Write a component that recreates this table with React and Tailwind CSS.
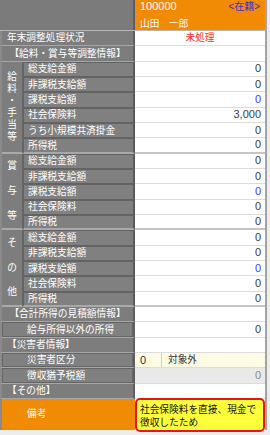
const FONT = { fontFamily: '"Liberation Sans", "Noto Sans CJK JP", sans-serif' };

const valueTone = {
  normal: "text-[#3a3a3a]",
  blue: "text-[#3d3dff]",
  muted: "text-[#8a8a8a]",
};

function Value({ children, tone = "normal", last, gray }) {
  return (
    <div
      className={`flex h-[15.33px] items-center justify-end pr-[4px] text-[11px] leading-none ${
        gray ? "bg-[#e9e9e9]" : "bg-white"
      } ${last ? "border-b-2 border-[#c4c4c4]" : "border-b border-[#dcdcdc]"} ${valueTone[tone]}`}
    >
      {children}
    </div>
  );
}

function SectionRow({ label, center, indent, children, value }) {
  return (
    <div className="flex h-[15.33px]">
      <div className="flex w-[135px] bg-[#7d7d7d] border-b border-[#a6a6a6] border-l-2 border-l-[#8a8a8a] border-r-2 border-r-[#5e5e5e]">
        <div
          className={`flex flex-1 items-center whitespace-nowrap text-[9.7px] leading-none text-white ${
            center ? "justify-center" : indent ? "pl-[24px]" : "pl-[5px]"
          } ${indent ? "border border-[#666] bg-[#808080]" : ""}`}
        >
          {label}
        </div>
      </div>
      <div className="flex-1">
        {children || <Value>{value}</Value>}
      </div>
    </div>
  );
}

function Group({ chars, spread, items }) {
  return (
    <div className="flex">
      <div className="flex w-[135px] border-l-2 border-l-[#8a8a8a]">
        <div
          className={`flex w-[21px] flex-col items-center bg-[#7d7d7d] border-r border-[#666] border-b-2 border-b-[#a9a9a9] text-[9.7px] leading-[12px] text-white ${
            spread ? "justify-around" : "justify-center"
          }`}
        >
          {chars.map((c, i) => (
            <span key={i}>{c}</span>
          ))}
        </div>
        <div className="flex flex-1 flex-col">
          {items.map((it, i) => (
            <div
              key={i}
              className={`flex h-[15.33px] items-center whitespace-nowrap bg-[#808080] border border-[#636363] border-r-2 border-r-[#5a5a5a] pl-[4px] text-[9.7px] leading-none text-white ${
                i === items.length - 1 ? "border-b-2 border-b-[#a9a9a9]" : ""
              }`}
            >
              {it.label}
            </div>
          ))}
        </div>
      </div>
      <div className="flex flex-1 flex-col">
        {items.map((it, i) => (
          <Value key={i} tone={it.tone} last={i === items.length - 1}>
            {it.value}
          </Value>
        ))}
      </div>
    </div>
  );
}

const base = [
  { label: "総支給金額", value: "0" },
  { label: "非課税支給額", value: "0" },
  { label: "課税支給額", value: "0", tone: "blue" },
  { label: "社会保険料", value: "0" },
];

export default function App() {
  const salary = [
    base[0],
    base[1],
    base[2],
    { label: "社会保険料", value: "3,000" },
    { label: "うち小規模共済掛金", value: "0" },
    { label: "所得税", value: "0" },
  ];
  const bonus = [...base, { label: "所得税", value: "0" }];

  return (
    <div className="h-[435px] w-[270px] overflow-hidden bg-[#ededed]" style={FONT}>
      <div className="w-[267px] border-r-2 border-[#a3a3a3]">
        {/* header */}
        <div className="flex h-[31px] border-b border-[#b5b5b5]">
          <div className="w-[135px] bg-[#7b7b7b] border-r-2 border-[#5e5e5e]" />
          <div className="flex flex-1 flex-col justify-center gap-[7px] bg-[#f18a05] px-[5px] text-white">
            <div className="flex items-center justify-between text-[11px] leading-none">
              <span>100000</span>
              <span className="text-[10px] text-[#3b2fc9]">&lt;在籍&gt;</span>
            </div>
            <div className="text-[9.7px] leading-none">山田　一郎</div>
          </div>
        </div>

        <SectionRow label="年末調整処理状況">
          <div className="flex h-[15.33px] items-center justify-center border-b border-[#dcdcdc] bg-white text-[9.7px] leading-none text-[#ff2a2a]">
            未処理
          </div>
        </SectionRow>
        <SectionRow label="【給料・賞与等調整情報】" center value="" />

        <Group chars={["給", "料", "・", "手", "当", "等"]} items={salary} />
        <Group chars={["賞", "与", "等"]} spread items={bonus} />
        <Group chars={["そ", "の", "他"]} spread items={bonus} />

        <SectionRow label="【合計所得の見積額情報】" center value="" />
        <SectionRow label="給与所得以外の所得" indent value="0" />
        <SectionRow label="【災害者情報】" value="" />
        <SectionRow label="災害者区分" indent>
          <div className="flex h-[15.33px] border-b border-[#dcdcdc] bg-[#fdfbe3] text-[9.7px] leading-none text-[#333]">
            <div className="flex w-[27px] items-center border-r border-[#cfcfcf] pl-[5px] text-[11px]">0</div>
            <div className="flex items-center pl-[6px]">対象外</div>
          </div>
        </SectionRow>
        <SectionRow label="徴収猶予税額" indent>
          <Value tone="muted" gray>0</Value>
        </SectionRow>
        <SectionRow label="【その他】" value="" />

        {/* remarks */}
        <div className="flex h-[31px]">
          <div className="flex w-[135px] border-l-2 border-[#8a8a8a] bg-[#f18a05]">
            <div className="flex items-center pl-[25px] text-[9.7px] text-white">備考</div>
          </div>
          <div className="flex-1 bg-white">
            <div className="-mt-[1px] h-[34px] whitespace-nowrap rounded-[5px] border-2 border-[#e8141c] bg-[#ffff3c] px-[3px] pt-[3px] text-[9.7px] leading-[13px] text-[#111]">
              社会保険料を直接、現金で
              <br />
              徴収したため
            </div>
          </div>
        </div>
      </div>
    </div>
  );
}
